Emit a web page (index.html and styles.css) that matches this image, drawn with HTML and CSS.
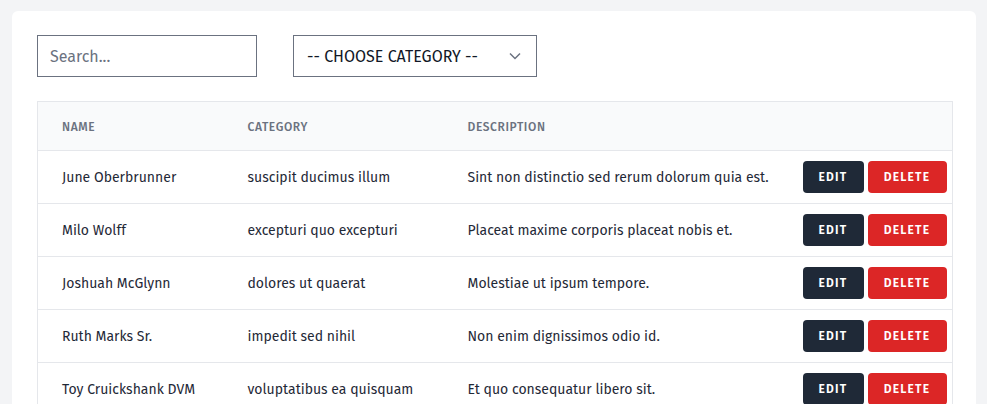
FILE: index.html
```html
<!DOCTYPE html>
<html>
<head>
<meta charset="utf-8">
<link rel="stylesheet" href="styles.css">
</head>
<body>
<div class="card">
  <div class="filters">
    <input class="search" type="text" placeholder="Search...">
    <div class="select">
      <span>-- CHOOSE CATEGORY --</span>
      <svg class="chev" width="12" height="8" viewBox="0 0 12 8"><path d="M1 1.5 L6 6.5 L11 1.5" fill="none" stroke="#6b7280" stroke-width="1.5"/></svg>
    </div>
  </div>
  <table class="grid">
    <colgroup>
      <col class="c-name"><col class="c-cat"><col class="c-desc"><col class="c-act">
    </colgroup>
    <thead>
      <tr><th>Name</th><th>Category</th><th>Description</th><th></th></tr>
    </thead>
    <tbody>
      <tr><td>June Oberbrunner</td><td>suscipit ducimus illum</td><td>Sint non distinctio sed rerum dolorum quia est.</td><td class="act"><button class="btn edit">Edit</button><button class="btn del">Delete</button></td></tr>
      <tr><td>Milo Wolff</td><td>excepturi quo excepturi</td><td>Placeat maxime corporis placeat nobis et.</td><td class="act"><button class="btn edit">Edit</button><button class="btn del">Delete</button></td></tr>
      <tr><td>Joshuah McGlynn</td><td>dolores ut quaerat</td><td>Molestiae ut ipsum tempore.</td><td class="act"><button class="btn edit">Edit</button><button class="btn del">Delete</button></td></tr>
      <tr><td>Ruth Marks Sr.</td><td>impedit sed nihil</td><td>Non enim dignissimos odio id.</td><td class="act"><button class="btn edit">Edit</button><button class="btn del">Delete</button></td></tr>
      <tr><td>Toy Cruickshank DVM</td><td>voluptatibus ea quisquam</td><td>Et quo consequatur libero sit.</td><td class="act"><button class="btn edit">Edit</button><button class="btn del">Delete</button></td></tr>
    </tbody>
  </table>
</div>
</body>
</html>
```
FILE: styles.css
```css
* { box-sizing: border-box; }
html, body { margin: 0; }
body {
  background: #f3f4f6;
  padding: 11px 11px 0 12px;
  font-family: "Fira Sans", Lato, "Noto Sans", sans-serif;
  color: #1f2937;
  overflow: hidden;
  height: 404px;
}
.card {
  background: #fff;
  border-radius: 6px;
  padding: 24px 23px 40px 25px;
}
.filters {
  display: flex;
  gap: 36px;
  margin-bottom: 24px;
}
.search {
  width: 220px;
  height: 42px;
  border: 1px solid #6b7280;
  border-radius: 0;
  padding: 0 12px;
  font: inherit;
  font-size: 16px;
  color: #1f2937;
  outline: none;
}
.search::placeholder { color: #6b7280; }
.select {
  width: 244px;
  height: 42px;
  border: 1px solid #6b7280;
  display: flex;
  align-items: center;
  justify-content: space-between;
  padding: 0 15px 0 13px;
  font-size: 16px;
  color: #111827;
}
.chev { display: block; }
.grid {
  width: 916px;
  border-collapse: collapse;
  table-layout: fixed;
  border: 1px solid #e5e7eb;
}
.c-name { width: 186px; }
.c-cat { width: 220px; }
.c-act { width: 152px; }
.grid th {
  background: #f9fafb;
  height: 49px;
  text-align: left;
  padding: 2px 0 0 24px;
  font-size: 12px;
  font-weight: 500;
  letter-spacing: 0.05em;
  text-transform: uppercase;
  color: #6b7280;
  border-bottom: 1px solid #e5e7eb;
}
.grid td {
  height: 53px;
  padding: 0 0 0 24px;
  font-size: 14px;
  white-space: nowrap;
  border-bottom: 1px solid #e5e7eb;
}
.grid td.act {
  padding: 0 6px 0 2px;
  font-size: 0;
}
.btn {
  height: 32px;
  border: 0;
  border-radius: 4px;
  color: #fff;
  font-family: inherit;
  font-size: 12px;
  font-weight: 600;
  letter-spacing: 0.1em;
  text-transform: uppercase;
  padding: 0;
  vertical-align: middle;
}
.edit { width: 61px; background: #1f2937; }
.del { width: 79px; background: #dc2626; margin-left: 4px; }
```
